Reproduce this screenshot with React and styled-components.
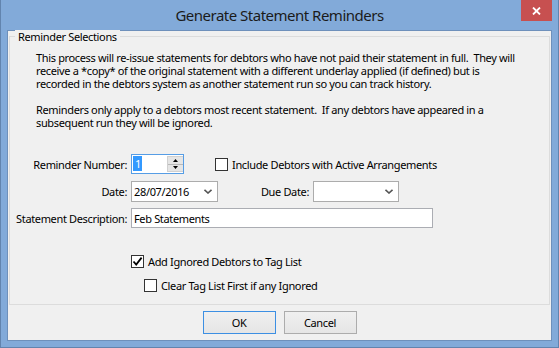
import React from "react";
import styled, { createGlobalStyle } from "styled-components";

const GlobalStyle = createGlobalStyle`
  * { box-sizing: border-box; }
  html, body { margin: 0; padding: 0; background: #82aad9; }
  body {
    font-family: "Noto Sans", "Open Sans", sans-serif;
    font-size: 11px;
    line-height: 13px;
    letter-spacing: -0.35px;
    color: #000;
  }
`;

const Window = styled.div`
  width: 559px;
  height: 348px;
  display: flex;
  flex-direction: column;
  background: #82aad9;
  border: 1px solid #6284ae;
  border-top: none;
  padding: 0 6px 6px;
`;

const TitleBar = styled.div`
  height: 30px;
  flex: none;
  display: grid;
  grid-template-columns: 1fr auto 1fr;
`;

const Title = styled.div`
  grid-column: 2;
  font-size: 15px;
  line-height: 30px;
  letter-spacing: -0.5px;
  color: #1b1b1b;
  white-space: nowrap;
`;

const CloseButton = styled.div`
  grid-column: 3;
  justify-self: end;
  width: 31px;
  height: 21px;
  background: #c75050;
  display: flex;
  align-items: center;
  justify-content: center;
`;

const Client = styled.div`
  flex: 1;
  display: flex;
  flex-direction: column;
  background: #f0f0f0;
  border: 1px solid #6e90bb;
`;

const GroupBox = styled.div`
  position: relative;
  height: 269px;
  margin: 5px 1px 0;
  border: 1px solid #dcdcdc;
  padding-top: 14px;
`;

const GroupLabel = styled.span`
  position: absolute;
  top: -7px;
  left: 5px;
  padding: 0 3px;
  background: #f0f0f0;
`;

const Intro = styled.div`
  margin-left: 26px;
  white-space: pre;
`;

const Form = styled.div`
  margin-top: 25px;
  display: flex;
  flex-direction: column;
`;

const Row = styled.div`
  display: flex;
  align-items: center;
  margin-top: ${(p) => p.$gap || 0}px;
  padding-left: ${(p) => p.$indent || 0}px;
`;

const Label = styled.div`
  width: ${(p) => p.$width}px;
  margin-right: 4px;
  text-align: right;
  white-space: nowrap;
`;

const SpinBox = styled.div`
  width: 53px;
  height: 20px;
  display: flex;
  background: #fff;
  border: 1px solid #569de5;
`;

const SpinText = styled.div`
  flex: 1;
  padding: 1px 0 0 1px;
`;

const Selected = styled.span`
  display: inline-block;
  padding: 0 1px 0 2px;
  line-height: 15px;
  background: #3399ff;
  color: #fff;
`;

const SpinButtons = styled.div`
  width: 16px;
  margin: 1px 0 1px;
  display: flex;
  flex-direction: column;
  background: #e5e5e5;
  border: 1px solid #d0d0d0;
  border-right: none;
`;

const SpinHalf = styled.div`
  flex: 1;
  display: flex;
  align-items: center;
  justify-content: center;
  border-top: ${(p) => (p.$lower ? "1px solid #b9b9b9" : "none")};
`;

const Combo = styled.div`
  width: ${(p) => p.$width}px;
  height: 21px;
  display: flex;
  align-items: center;
  background: #fff;
  border: 1px solid #acacac;
`;

const ComboText = styled.div`
  flex: 1;
  padding-left: 2px;
  white-space: nowrap;
`;

const ComboArrow = styled.div`
  width: 18px;
  display: flex;
  justify-content: center;
`;

const TextBox = styled.div`
  width: 302px;
  height: 20px;
  display: flex;
  align-items: center;
  padding-left: 2px;
  background: #fff;
  border: 1px solid #abadb3;
`;

const Check = styled.label`
  display: flex;
  align-items: center;
  gap: 4px;
  margin-left: ${(p) => p.$offset || 0}px;
  white-space: nowrap;
`;

const Box = styled.span`
  width: 13px;
  height: 13px;
  flex: none;
  display: flex;
  align-items: center;
  justify-content: center;
  background: #fff;
  border: 1px solid #333;
`;

const Footer = styled.div`
  display: flex;
  justify-content: center;
  gap: 8px;
  padding-top: 6px;
`;

const Button = styled.div`
  width: 73px;
  height: 23px;
  display: flex;
  align-items: center;
  justify-content: center;
  background: linear-gradient(#f0f0f0, #e5e5e5);
  border: 1px solid ${(p) => (p.$default ? "#3c8fe3" : "#acacac")};
`;

const Chevron = () => (
  <svg width="8" height="5" viewBox="0 0 8 5">
    <path d="M0.5 0.8 L4 4 L7.5 0.8" fill="none" stroke="#555" strokeWidth="1.6" />
  </svg>
);

const Arrow = ({ down }) => (
  <svg width="5" height="3" viewBox="0 0 5 3">
    <path d={down ? "M0 0 H5 L2.5 3 Z" : "M0 3 H5 L2.5 0 Z"} fill="#000" />
  </svg>
);

const Tick = () => (
  <svg width="11" height="11" viewBox="0 0 11 11">
    <path d="M1.5 5.5 L4.2 8.6 L9.6 1.6" fill="none" stroke="#000" strokeWidth="1.8" />
  </svg>
);

const CheckBox = ({ checked, offset, children }) => (
  <Check $offset={offset}>
    <Box>{checked && <Tick />}</Box>
    {children}
  </Check>
);

const introLines = [
  "This process will re-issue statements for debtors who have not paid their statement in full.  They will",
  "receive a *copy* of the original statement with a different underlay applied (if defined) but is",
  "recorded in the debtors system as another statement run so you can track history.",
  " ",
  "Reminders only apply to a debtors most recent statement.  If any debtors have appeared in a",
  "subsequent run they will be ignored.",
];

export default function App() {
  return (
    <>
      <GlobalStyle />
      <Window>
        <TitleBar>
          <Title>Generate Statement Reminders</Title>
          <CloseButton>
            <svg width="9" height="8" viewBox="0 0 9 8">
              <path d="M1 0.5 L8 7.5 M8 0.5 L1 7.5" stroke="#fff" strokeWidth="1.8" />
            </svg>
          </CloseButton>
        </TitleBar>
        <Client>
          <GroupBox>
            <GroupLabel>Reminder Selections</GroupLabel>
            <Intro>{introLines.join("\n")}</Intro>
            <Form>
              <Row>
                <Label $width={117}>Reminder Number:</Label>
                <SpinBox>
                  <SpinText>
                    <Selected>1</Selected>
                  </SpinText>
                  <SpinButtons>
                    <SpinHalf>
                      <Arrow />
                    </SpinHalf>
                    <SpinHalf $lower>
                      <Arrow down />
                    </SpinHalf>
                  </SpinButtons>
                </SpinBox>
                <CheckBox offset={31}>Include Debtors with Active Arrangements</CheckBox>
              </Row>
              <Row $gap={7}>
                <Label $width={117}>Date:</Label>
                <Combo $width={87}>
                  <ComboText>28/07/2016</ComboText>
                  <ComboArrow>
                    <Chevron />
                  </ComboArrow>
                </Combo>
                <Label $width={91}>Due Date:</Label>
                <Combo $width={86}>
                  <ComboText />
                  <ComboArrow>
                    <Chevron />
                  </ComboArrow>
                </Combo>
              </Row>
              <Row $gap={6}>
                <Label $width={117}>Statement Description:</Label>
                <TextBox>Feb Statements</TextBox>
              </Row>
              <Row $gap={27} $indent={121}>
                <CheckBox checked>Add Ignored Debtors to Tag List</CheckBox>
              </Row>
              <Row $gap={11} $indent={134}>
                <CheckBox>Clear Tag List First if any Ignored</CheckBox>
              </Row>
            </Form>
          </GroupBox>
          <Footer>
            <Button $default>OK</Button>
            <Button>Cancel</Button>
          </Footer>
        </Client>
      </Window>
    </>
  );
}
